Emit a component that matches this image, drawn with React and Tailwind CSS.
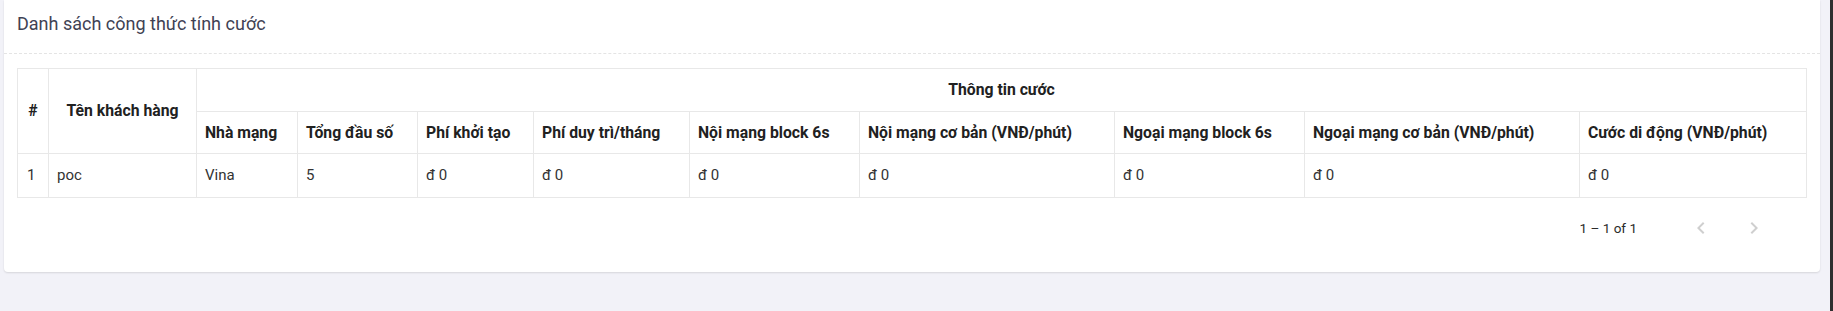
const columns = [
  { key: 'network', label: 'Nhà mạng', width: 101 },
  { key: 'total', label: 'Tổng đầu số', width: 120 },
  { key: 'initFee', label: 'Phí khởi tạo', width: 116 },
  { key: 'monthlyFee', label: 'Phí duy trì/tháng', width: 156 },
  { key: 'inBlock', label: 'Nội mạng block 6s', width: 170 },
  { key: 'inBasic', label: 'Nội mạng cơ bản (VNĐ/phút)', width: 255 },
  { key: 'outBlock', label: 'Ngoại mạng block 6s', width: 190 },
  { key: 'outBasic', label: 'Ngoại mạng cơ bản (VNĐ/phút)', width: 275 },
  { key: 'mobile', label: 'Cước di động (VNĐ/phút)', width: 227 },
];

const rows = [
  {
    id: 1,
    customer: 'poc',
    network: 'Vina',
    total: '5',
    initFee: 'đ 0',
    monthlyFee: 'đ 0',
    inBlock: 'đ 0',
    inBasic: 'đ 0',
    outBlock: 'đ 0',
    outBasic: 'đ 0',
    mobile: 'đ 0',
  },
];

function PagerIcon({ dir }) {
  return (
    <svg width="24" height="24" viewBox="0 0 24 24" fill="#cfcfcf">
      {dir === 'left' ? (
        <path d="M15.41 7.41L14 6l-6 6 6 6 1.41-1.41L10.83 12z" />
      ) : (
        <path d="M10 6L8.59 7.41 13.17 12l-4.58 4.59L10 18l6-6z" />
      )}
    </svg>
  );
}

export default function App() {
  return (
    <div className="flex h-[311px] w-full bg-[#f2f2f8] font-['Roboto','Liberation_Sans',sans-serif]">
      <div className="flex-1 pl-[4px] pr-[10px]">
        <div className="h-[272px] bg-white rounded-b-[4px] shadow-[0_1px_2px_rgba(0,0,0,0.12)] flex flex-col">
          {/* card header */}
          <div className="h-[54px] border-b border-dashed border-[#e4e4e4] px-[13px] pt-[11px]">
            <h3 className="text-[18px] leading-[26px] text-[#3f4254] font-normal">Danh sách công thức tính cước</h3>
          </div>

          <div className="px-[13px] pt-[14px]">
            <table className="table-fixed border-collapse w-[1789px] text-[#212121]">
              <colgroup>
                <col style={{ width: 31 }} />
                <col style={{ width: 148 }} />
                {columns.map((c) => (
                  <col key={c.key} style={{ width: c.width }} />
                ))}
              </colgroup>
              <thead className="text-[15.75px]">
                <tr className="h-[43px]">
                  <th rowSpan={2} className="border border-[#e8e8e8] font-bold text-center">#</th>
                  <th rowSpan={2} className="border border-[#e8e8e8] font-bold text-center">Tên khách hàng</th>
                  <th colSpan={columns.length} className="border border-[#e8e8e8] font-bold text-center">Thông tin cước</th>
                </tr>
                <tr className="h-[42px]">
                  {columns.map((c) => (
                    <th key={c.key} className="border border-[#e8e8e8] font-bold text-left px-2 whitespace-nowrap">
                      {c.label}
                    </th>
                  ))}
                </tr>
              </thead>
              <tbody className="text-[15px]">
                {rows.map((r) => (
                  <tr key={r.id} className="h-[44px] text-[#333333]">
                    <td className="border border-[#e8e8e8] px-[9px]">{r.id}</td>
                    <td className="border border-[#e8e8e8] px-2">{r.customer}</td>
                    {columns.map((c) => (
                      <td key={c.key} className="border border-[#e8e8e8] px-2">{r[c.key]}</td>
                    ))}
                  </tr>
                ))}
              </tbody>
            </table>
          </div>

          {/* paginator */}
          <div className="flex items-center justify-end h-[56px] mt-[2px] pr-[46px] text-[13.5px] text-[#2b2b2b]">
            <span className="mr-[44px]">1 – 1 of 1</span>
            <div className="flex gap-[13px]">
              <button disabled className="w-10 h-10 flex items-center justify-center">
                <PagerIcon dir="left" />
              </button>
              <button disabled className="w-10 h-10 flex items-center justify-center">
                <PagerIcon dir="right" />
              </button>
            </div>
          </div>
        </div>
      </div>
      <div className="w-[4px] bg-[#2f2f2f]" />
    </div>
  );
}
